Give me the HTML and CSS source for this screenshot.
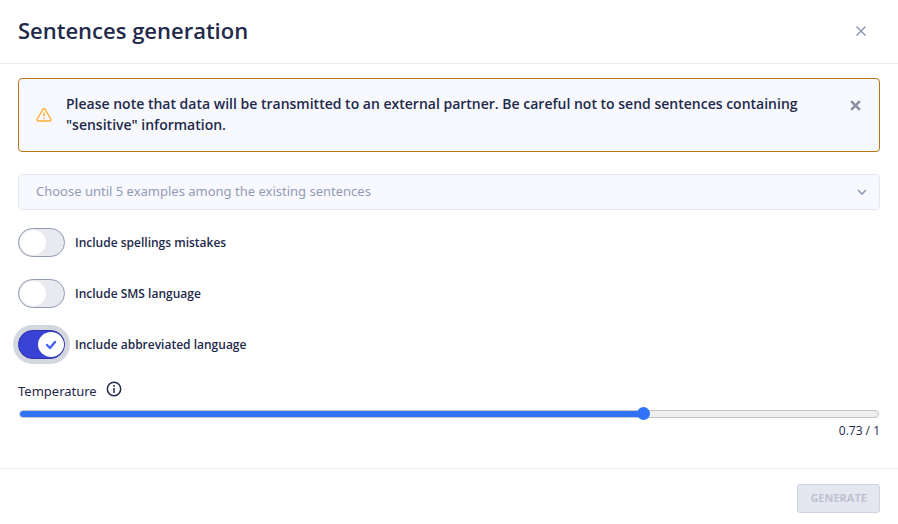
FILE: index.html
```html
<!DOCTYPE html>
<html lang="en">
<head>
<meta charset="utf-8">
<meta name="viewport" content="width=device-width, initial-scale=1">
<title>Sentences generation</title>
<link rel="stylesheet" href="styles.css">
</head>
<body>
<main class="modal">
  <header class="modal-header">
    <h1>Sentences generation</h1>
    <button class="close" type="button" aria-label="Close">
      <svg width="10" height="10" viewBox="0 0 10 10"><path d="M.5 .5l9 9M9.5 .5l-9 9" stroke-width="1.5"/></svg>
    </button>
  </header>
  <section class="modal-body">
    <div class="alert" role="alert">
      <svg class="warning" width="16" height="14" viewBox="0 0 16 14"><path d="M6.9 1.3Q8 0 9.1 1.3L14.8 10.9Q15.3 12.8 13.6 13H2.4Q.7 12.8 1.2 10.9ZM8 4.5v4M8 10v1.2"/></svg>
      <p>Please note that data will be transmitted to an external partner. Be careful not to send sentences containing "sensitive" information.</p>
      <button class="close" type="button" aria-label="Dismiss">
        <svg width="11" height="11" viewBox="0 0 10 10"><path d="M1 1l8 8M9 1l-8 8" stroke-width="2.3"/></svg>
      </button>
    </div>
    <div class="select">
      <select aria-label="Examples">
        <option>Choose until 5 examples among the existing sentences</option>
      </select>
      <svg class="chevron" width="10" height="6" viewBox="0 0 10 6"><path d="M1 1l4 4 4-4"/></svg>
    </div>
    <div class="options">
      <label class="option"><input type="checkbox"><span class="switch"><span class="knob"></span></span>Include spellings mistakes</label>
      <label class="option"><input type="checkbox"><span class="switch"><span class="knob"></span></span>Include SMS language</label>
      <label class="option"><input type="checkbox" checked autofocus><span class="switch"><span class="knob"><svg width="12" height="10" viewBox="0 0 12 10"><path d="M2 5l3 3 5-6"/></svg></span></span>Include abbreviated language</label>
    </div>
    <div class="field">
      <div class="field-title">
        <label for="temperature">Temperature</label>
        <svg class="info" width="16" height="16" viewBox="0 0 16 16"><circle cx="8" cy="8" r="6.7"/><path d="M8 7v5M8 4v1.7"/></svg>
      </div>
      <input class="range" id="temperature" type="range" min="0" max="1" step="0.01" value="0.73" style="--value: 73%">
      <output for="temperature">0.73 / 1</output>
    </div>
  </section>
  <footer class="modal-footer">
    <button class="generate" type="button" disabled>GENERATE</button>
  </footer>
</main>
</body>
</html>
```

FILE: styles.css
```css
* { box-sizing: border-box; }

body {
  margin: 0;
  background: #fff;
  color: #23294b;
  font: 13px/20px "Noto Sans", sans-serif;
}

svg { display: block; flex: none; fill: none; }

.modal-header {
  display: flex;
  align-items: center;
  justify-content: space-between;
  padding: 13px 32px 16px 18px;
  border-bottom: 1px solid #eaebf5;
}

h1 {
  margin: 0;
  font: 600 22px/34px "Open Sans", sans-serif;
}

.close {
  padding: 0;
  border: 0;
  background: none;
  cursor: pointer;
}

.close path { stroke: #8f9ab5; }

.modal-header .close { margin-top: 2px; }

.modal-body { padding: 14px 18px 27px; }

.alert {
  display: flex;
  align-items: center;
  gap: 14px;
  padding: 14px 18px 16px 17px;
  border: 1px solid #b87519;
  border-radius: 4px;
  background: #f7f9fe;
}

.alert p {
  flex: 1;
  max-width: 740px;
  margin: 0;
  font: 600 14px/21px "Open Sans", sans-serif;
}

.alert .close {
  align-self: flex-start;
  margin: 7px 0 0 auto;
}

.alert .close path { stroke: #8b8fa3; }

.warning { margin-top: 2px; }

.warning path { stroke: #fbb034; stroke-width: 1.4; }

.select {
  display: grid;
  align-items: center;
  margin-top: 22px;
}

.select > * { grid-area: 1 / 1; }

.select select {
  width: 100%;
  height: 36px;
  padding: 0 32px 2px 17px;
  appearance: none;
  border: 1px solid #e3e7f1;
  border-radius: 4px;
  background: #f7f9fe;
  color: #939bb4;
  font: 13px "Noto Sans", sans-serif;
}

.chevron {
  justify-self: end;
  margin-right: 13px;
  pointer-events: none;
  stroke: #8f9ab5;
  stroke-width: 1.6;
}

.options {
  display: flex;
  flex-direction: column;
  align-items: flex-start;
  gap: 22px;
  margin-top: 18px;
}

.option {
  display: flex;
  align-items: center;
  gap: 10px;
  font: 600 12px/20px "Open Sans", sans-serif;
}

.option input {
  position: absolute;
  opacity: 0;
}

.switch {
  display: flex;
  width: 47px;
  height: 29px;
  padding: 1px;
  border: 1px solid #919bb5;
  border-radius: 15px;
  background: #e9eaf0;
}

.knob {
  display: grid;
  place-items: center;
  width: 26px;
  height: 25px;
  border-radius: 50%;
  background: #fff;
}

.knob path { stroke: #4263fb; stroke-width: 2.4; stroke-linecap: round; stroke-linejoin: round; }

input:checked + .switch {
  justify-content: flex-end;
  padding-right: 0;
  border-color: #2d32a8;
  background: #3943d5;
  box-shadow: 0 0 0 5px #d3d7e0;
}

.field {
  display: flex;
  flex-direction: column;
  margin-top: 22px;
}

.field-title {
  display: flex;
  gap: 9px;
}

.info { stroke: #23294b; stroke-width: 1.5; }

.range {
  appearance: none;
  height: 14px;
  margin: 6px 1px 0;
  background: none;
}

.range::-webkit-slider-runnable-track {
  height: 8px;
  border: 1px solid #c3c5c9;
  border-radius: 4px;
  background: linear-gradient(to right, #3072fa var(--value), #efefef var(--value));
}

.range::-webkit-slider-thumb {
  appearance: none;
  width: 13px;
  height: 13px;
  margin-top: -4px;
  border-radius: 50%;
  background: #3072fa;
}

output {
  align-self: flex-end;
  font: 12px/20px "Open Sans", sans-serif;
}

.modal-footer {
  display: flex;
  justify-content: flex-end;
  padding: 15px 18px 11px;
  border-top: 1px solid #eaebf5;
}

.generate {
  height: 29px;
  padding: 0 12px 2px;
  border: 1px solid #cfd4e2;
  border-radius: 3px;
  background: #e4e7f0;
  color: #bcc2d4;
  font: 700 11px "Open Sans", sans-serif;
}
```
